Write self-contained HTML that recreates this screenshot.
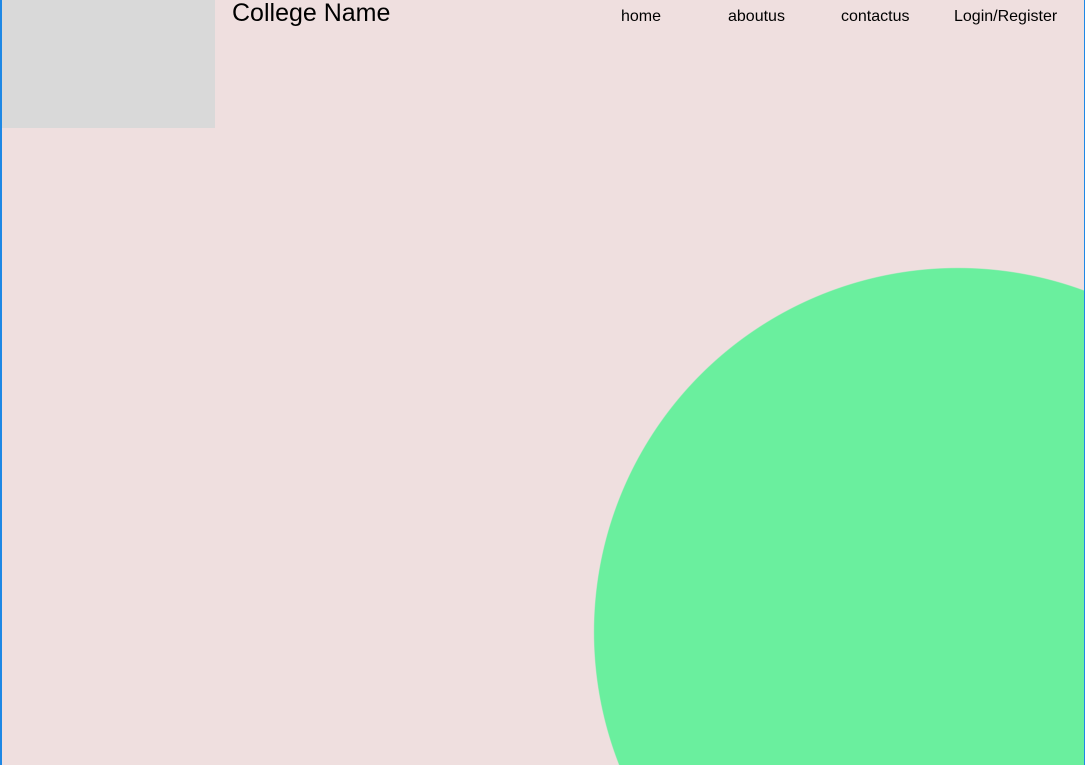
<!DOCTYPE html>
<html><head><meta charset="utf-8"><style>
html,body{margin:0;padding:0;width:1085px;height:765px;overflow:hidden;}
.w{width:1085px;height:765px;overflow:hidden;position:relative;font-family:"Liberation Sans",sans-serif;
background:radial-gradient(circle 364px at 958px 632px,#6aef9e 363.5px,#efdfdf 364.5px);}
.bl{position:absolute;left:0;top:0;width:2px;height:765px;background:#1e88e5;z-index:5}
.br{position:absolute;right:0;top:0;width:1px;height:765px;background:#1e88e5;z-index:5}
.logo{position:absolute;left:2px;top:0;width:213px;height:128px;background:#d9d9d9}
.title{position:absolute;left:232px;top:-1px;font-size:25px;color:#000;line-height:28px}
.nav{position:absolute;top:8px;font-size:16px;color:#000;line-height:18px}
</style></head><body><div class="w">
<div class="bl"></div><div class="br"></div>
<div class="logo"></div>
<div class="title">College Name</div>
<div class="nav" style="left:621px">home</div>
<div class="nav" style="left:728px">aboutus</div>
<div class="nav" style="left:841px">contactus</div>
<div class="nav" style="left:954px">Login/Register</div>
</div></body></html>
